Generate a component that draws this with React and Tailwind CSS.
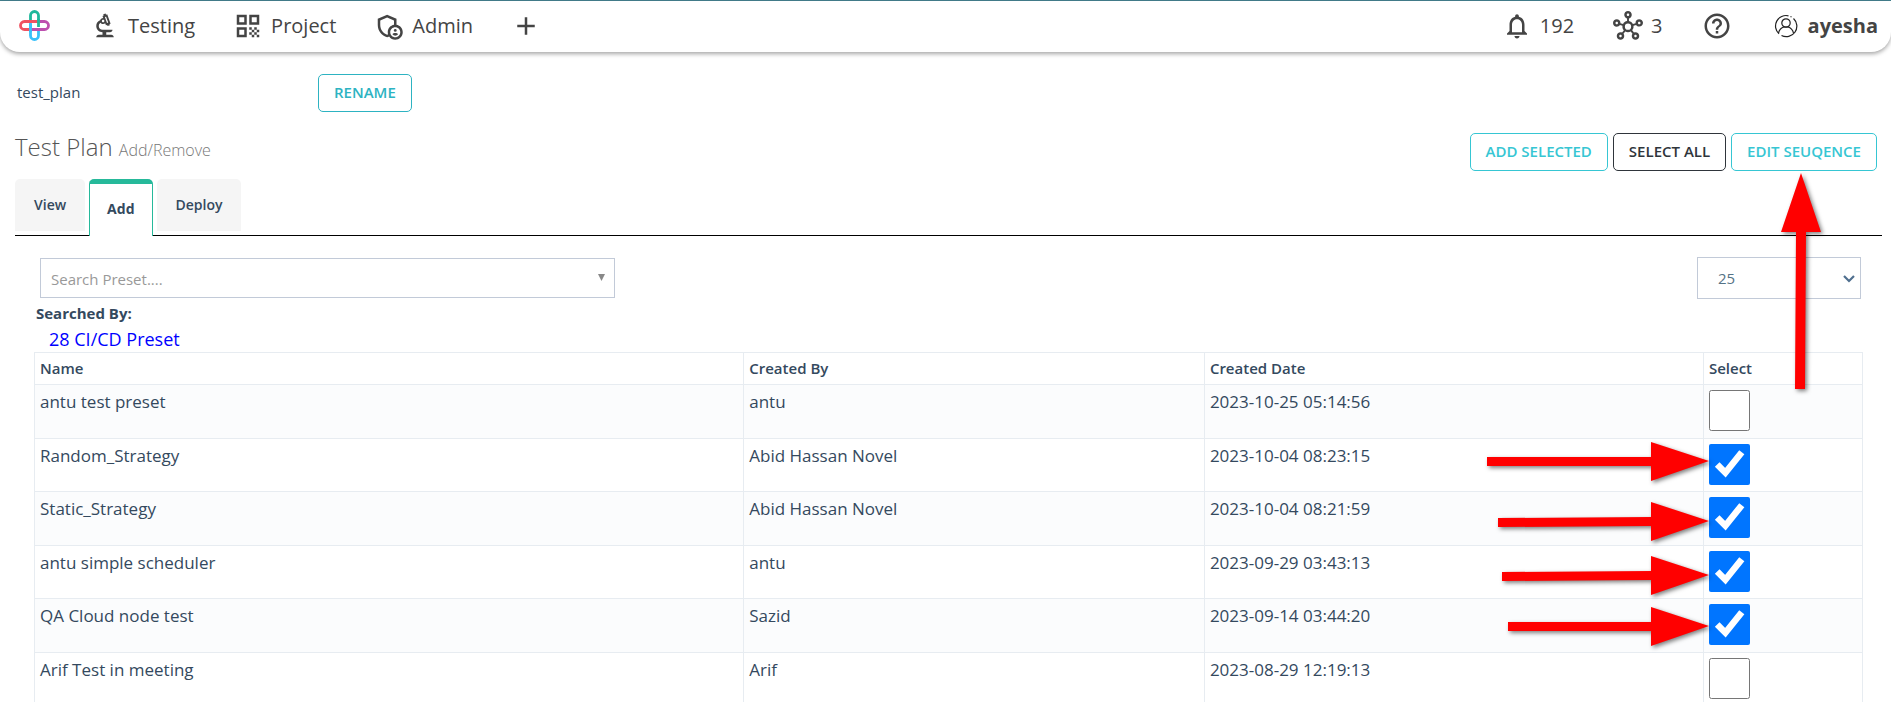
import { useState } from "react";
import {
  MdOutlineBiotech,
  MdQrCode,
  MdOutlineAdminPanelSettings,
  MdAdd,
  MdNotificationsNone,
  MdOutlineHub,
  MdHelpOutline,
} from "react-icons/md";

const presets = [
  { name: "antu test preset", by: "antu", date: "2023-10-25 05:14:56", selected: false },
  { name: "Random_Strategy", by: "Abid Hassan Novel", date: "2023-10-04 08:23:15", selected: true, arrow: { length: 222, y: 0, tail: 0 } },
  { name: "Static_Strategy", by: "Abid Hassan Novel", date: "2023-10-04 08:21:59", selected: true, arrow: { length: 211, y: 7, tail: 1 } },
  { name: "antu simple scheduler", by: "antu", date: "2023-09-29 03:43:13", selected: true, arrow: { length: 207, y: 7, tail: 1 } },
  { name: "QA Cloud node test", by: "Sazid", date: "2023-09-14 03:44:20", selected: true, arrow: { length: 201, y: 5, tail: 0 } },
  { name: "Arif Test in meeting", by: "Arif", date: "2023-08-29 12:19:13", selected: false },
];

function Logo() {
  return (
    <svg viewBox="0 0 31 31" className="size-[31px]" fill="none" strokeWidth="2.8" aria-hidden="true">
      <path d="M19.5 11.5V5.5a4 4 0 0 0-8 0V12" stroke="#1fb89b" />
      <path d="M11.5 12v13.5a4 4 0 0 0 8 0V19.5" stroke="#38c0fa" />
      <path d="M12 19.5H5.5a4 4 0 0 1 0-8H20" stroke="#ef5261" />
      <path d="M20 11.5h5.5a4 4 0 0 1 0 8H12" stroke="#bd4fae" />
      <path d="M19.5 9v8" stroke="#1fb89b" />
      <path d="M11.5 14v8" stroke="#38c0fa" />
    </svg>
  );
}

function UserIcon() {
  return (
    <svg viewBox="0 0 24 24" className="size-6" fill="none" stroke="#222" strokeWidth="1.2" aria-hidden="true">
      <path d="M14.5 1.8a10.5 10.5 0 0 0-9.5 18M7.5 21.5a10.5 10.5 0 0 0 12-17M16.5 2.5l1 .5" />
      <circle cx="12" cy="9" r="4.2" />
      <path d="M4.5 19c1-4 3.5-5.5 5.5-6h4c2 .5 4.5 2 5.5 6" />
    </svg>
  );
}

function Arrow({ length, tail }) {
  const points = `0,${16 + tail} ${length - 58},${16} ${length - 58},1 ${length},20 ${length - 58},40 ${length - 58},25 0,${25 + tail}`;
  return (
    <svg width={length} height="42" className="overflow-visible drop-shadow-[2px_2px_2px_rgba(0,0,0,0.5)]" aria-hidden="true">
      <polygon points={points} fill="#f00" />
    </svg>
  );
}

function NavLink({ icon: Icon, label }) {
  return (
    <a href="#" className="flex items-center gap-2">
      <Icon className="size-[30px]" aria-hidden="true" />
      <span>{label}</span>
    </a>
  );
}

function OutlineButton({ children, tone }) {
  return (
    <button type="button" className={"h-[38px] rounded-[5px] border bg-white px-[15px] pb-[2px] text-[15px] leading-5 font-semibold " + tone}>
      {children}
    </button>
  );
}

export default function App() {
  const [rows, setRows] = useState(presets);
  const toggle = (i) => setRows(rows.map((r, n) => (n === i ? { ...r, selected: !r.selected } : r)));

  return (
    <div className="h-screen overflow-hidden bg-white font-['Open_Sans',sans-serif] text-[#34495e]">
      <header className="border-t border-[#44808f]">
        <nav className="flex h-[51px] items-center rounded-b-[20px] bg-white pr-[13px] pb-[2px] pl-[19px] text-xl text-[#444] shadow-[0_2px_4px_rgba(0,0,0,0.35)]">
          <a href="#" aria-label="Home"><Logo /></a>
          <div className="ml-10 flex items-center gap-[38px]">
            <NavLink icon={MdOutlineBiotech} label="Testing" />
            <NavLink icon={MdQrCode} label="Project" />
            <NavLink icon={MdOutlineAdminPanelSettings} label="Admin" />
            <button type="button" aria-label="Add"><MdAdd className="size-[30px]" /></button>
          </div>
          <div className="ml-auto flex items-center gap-[39px]">
            <NavLink icon={MdNotificationsNone} label="192" />
            <NavLink icon={MdOutlineHub} label="3" />
            <a href="#" aria-label="Help"><MdHelpOutline className="size-[30px]" /></a>
            <a href="#" className="flex items-center gap-[10px] pl-[3px] font-bold">
              <UserIcon />
              <span>ayesha</span>
            </a>
          </div>
        </nav>
      </header>

      <main className="pr-[9px] pl-[15px]">
        <div className="mt-[22px] flex items-center pl-[2px]">
          <span className="w-[301px] pb-[2px] text-[15px]">test_plan</span>
          <OutlineButton tone="border-[#2db3c2] text-[#2db3c2]">RENAME</OutlineButton>
        </div>

        <div className="mt-[15px] flex h-[50px] items-center justify-between pr-[5px]">
          <h1 className="pb-[11px] text-2xl font-light text-[#555]">
            Test Plan <small className="text-base text-[#777]">Add/Remove</small>
          </h1>
          <div className="relative flex gap-[5px]">
            <OutlineButton tone="border-[#36c6d3] text-[#36c6d3]">ADD SELECTED</OutlineButton>
            <OutlineButton tone="border-[#2f353b] text-[#2f353b]">SELECT ALL</OutlineButton>
            <OutlineButton tone="border-[#36c6d3] text-[#36c6d3]">EDIT SEUQENCE</OutlineButton>
            <div className="pointer-events-none absolute top-[40px] right-[56px] z-10">
              <svg width="40" height="217" className="overflow-visible drop-shadow-[2px_2px_2px_rgba(0,0,0,0.5)]" aria-hidden="true">
                <polygon points="20,0 40,59 25,59 24,216 14,216 15,59 0,59" fill="#f00" />
              </svg>
            </div>
          </div>
        </div>

        <div role="tablist" className="mt-[2px] flex h-[57px] items-start gap-1 border-b border-black text-sm font-semibold">
          <button type="button" role="tab" className="h-[52px] rounded-t-[5px] bg-[#f5f5f5] px-[19px]">View</button>
          <button type="button" role="tab" aria-selected="true" className="h-[57px] rounded-t-[5px] border border-t-[5px] border-b-0 border-[#26b99a] bg-white px-[17px] pb-[2px] font-bold">Add</button>
          <button type="button" role="tab" className="h-[52px] rounded-t-[5px] bg-[#f5f5f5] px-[19px]">Deploy</button>
        </div>

        <section className="px-[19px]">
          <div className="mt-[21px] flex items-center justify-between pr-[2px] pl-[6px]">
            <button type="button" className="flex h-10 w-[575px] items-center justify-between border border-[#c2cad8] pt-[2px] pr-[9px] pl-[10px] text-[15px] text-[#999]">
              <span>Search Preset....</span>
              <svg width="7" height="7" className="mb-1" aria-hidden="true"><path d="M0 0h7L3.5 7z" fill="#888" /></svg>
            </button>
            <div className="relative">
              <select aria-label="Rows per page" defaultValue="25" className="h-[42px] w-[164px] appearance-none border border-[#c2cad8] bg-white px-5 text-[15px] text-[#557386]">
                <option>25</option>
                <option>50</option>
                <option>100</option>
              </select>
              <svg viewBox="0 0 12 8" className="pointer-events-none absolute top-[18px] right-[6px] h-2 w-3" fill="none" stroke="#4f6f8f" strokeWidth="2.2" aria-hidden="true">
                <path d="M1 1l5 5 5-5" />
              </svg>
            </div>
          </div>
          <div className="mt-1 pl-[2px] text-[15px] leading-5 font-bold">Searched By:</div>
          <a href="#" className="ml-[15px] block pt-[3px] text-lg leading-[26px] text-[#0000ff]">28 CI/CD Preset</a>

          <table className="w-full table-fixed border-collapse text-left">
            <colgroup>
              <col className="w-[38.8%]" />
              <col className="w-[25.2%]" />
              <col className="w-[27.3%]" />
              <col />
            </colgroup>
            <thead>
              <tr className="h-8 text-[15px]">
                {["Name", "Created By", "Created Date", "Select"].map((h) => (
                  <th key={h} scope="col" className="border border-[#e7ecf1] px-[5px] font-semibold">{h}</th>
                ))}
              </tr>
            </thead>
            <tbody>
              {rows.map((r, i) => (
                <tr key={r.name} className="h-[54px] align-top text-[17px] leading-6 odd:bg-[#fbfcfd] even:h-[53px]">
                  <td className="border border-[#e7ecf1] px-[5px] pt-[5px]">{r.name}</td>
                  <td className="border border-[#e7ecf1] px-[5px] pt-[5px]">{r.by}</td>
                  <td className="border border-[#e7ecf1] px-[5px] pt-[5px]">{r.date}</td>
                  <td className="border border-[#e7ecf1] px-[5px] pt-[5px]">
                    <div className="relative size-[41px]">
                      <input
                        type="checkbox"
                        aria-label={"Select " + r.name}
                        checked={r.selected}
                        onChange={() => toggle(i)}
                        className="block size-[41px] accent-[#0075ff]"
                      />
                      {r.arrow && (
                        <div className="pointer-events-none absolute right-[41px] z-10" style={{ top: r.arrow.y - 3 }}>
                          <Arrow length={r.arrow.length} tail={r.arrow.tail} />
                        </div>
                      )}
                    </div>
                  </td>
                </tr>
              ))}
            </tbody>
          </table>
        </section>
      </main>
    </div>
  );
}
